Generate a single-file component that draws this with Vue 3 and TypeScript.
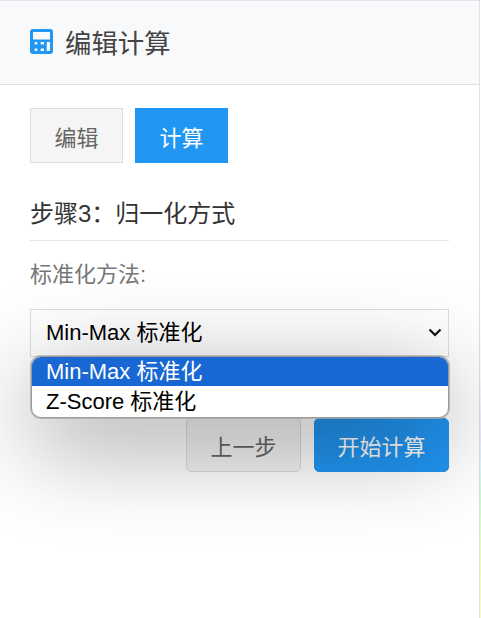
<script setup lang="ts">
const options: string[] = ['Min-Max 标准化', 'Z-Score 标准化']
</script>

<template>
  <div class="page">
    <div class="panel">
      <header class="head">
        <svg class="icon" viewBox="0 0 23 25" width="23" height="25" aria-hidden="true">
          <path fill="#2196f3" fill-rule="evenodd" d="M3 0h17a3 3 0 0 1 3 3v19a3 3 0 0 1-3 3H3a3 3 0 0 1-3-3V3a3 3 0 0 1 3-3zm0 3v7.5h17V3H3zm1.7 10v2.5h2.6V13H4.7zm6 0v2.5H14V13h-3.3zm6 0v9H20v-9h-3.3zM4.7 19.500v2.500h2.600v-2.500H4.700zm6 0v2.500H14v-2.500h-3.300z"/>
        </svg>
        <h1 class="title">编辑计算</h1>
      </header>
      <main class="body">
        <div class="tabs">
          <button class="tab">编辑</button>
          <button class="tab active">计算</button>
        </div>
        <h2 class="step">步骤3：归一化方式</h2>
        <label class="label">标准化方法:</label>
        <div class="field">
          <select class="select">
            <option v-for="o in options" :key="o">{{ o }}</option>
          </select>
          <svg class="chevron" viewBox="0 0 14 9" width="14" height="9" aria-hidden="true">
            <path d="M1.5 1.5 7 7l5.5-5.5" fill="none" stroke="#111" stroke-width="2.2" />
          </svg>
          <ul class="popup">
            <li v-for="(o, i) in options" :key="o" class="opt" :class="{ selected: i === 0 }">{{ o }}</li>
          </ul>
        </div>
        <div class="actions">
          <button class="btn prev">上一步</button>
          <button class="btn start">开始计算</button>
        </div>
      </main>
    </div>
    <div class="edge"></div>
  </div>
</template>

<style scoped>
.page {
  display: flex;
  width: 481px;
  height: 618px;
  overflow: hidden;
}
.panel {
  box-sizing: border-box;
  flex: none;
  width: 480px;
  height: 618px;
  background: #fff;
  border-top: 1px solid #e2e4e8;
  border-right: 1px solid #dfe0e2;
  font-family: "Liberation Sans", "Noto Sans CJK SC", sans-serif;
  color: #333;
}
.edge {
  flex: none;
  width: 1px;
  height: 618px;
  background: linear-gradient(to bottom, #fff 0, #fff 380px, #efeaff 433px, #d9f7fb 467px, #c8fbd0 500px, #f0fdb0 567px, #f8fcc8 618px);
}
.head {
  box-sizing: border-box;
  height: 84px;
  display: flex;
  align-items: center;
  gap: 12px;
  padding: 0 30px 2px;
  background: #f8f9fa;
  border-bottom: 1px solid #e0e0e0;
}
.icon { display: block; flex: none; }
.title {
  margin: 0;
  font-size: 26.4px;
  font-weight: 400;
  color: #444;
}
.body { padding: 23px 30px 0; }
.tabs { display: flex; gap: 12px; }
.tab {
  box-sizing: border-box;
  width: 93px;
  height: 55px;
  padding: 0;
  border: 1px solid #ddd;
  background: #f5f5f5;
  color: #666;
  font: inherit;
  font-size: 22px;
}
.tab.active {
  border-color: #2196f3;
  background: #2196f3;
  color: #fff;
}
.step {
  margin: 31px 0 0;
  padding-bottom: 6px;
  border-bottom: 1px solid #e5e5e5;
  font-size: 24px;
  line-height: 40px;
  font-weight: 400;
  color: #333;
}
.label {
  display: block;
  margin-top: 18px;
  font-size: 22px;
  line-height: 32px;
  color: #777;
}
.field { position: relative; margin-top: 18px; }
.select {
  box-sizing: border-box;
  display: block;
  width: 100%;
  height: 48px;
  padding: 0 15px 2px;
  border: 1px solid #ddd;
  background: #fff;
  color: #000;
  font: inherit;
  font-size: 22px;
  appearance: none;
  border-radius: 0;
}
.chevron {
  position: absolute;
  top: 19px;
  right: 7px;
  pointer-events: none;
}
.popup {
  position: absolute;
  top: 47px;
  left: 1px;
  right: 0;
  box-sizing: border-box;
  margin: 0;
  padding: 0;
  list-style: none;
  overflow: hidden;
  background: #fff;
  border: 1px solid #9c9c9c;
  border-radius: 10px;
  box-shadow: 0 0 0 1px rgba(170, 170, 170, 0.75), 0 24px 96px rgba(0, 0, 0, 0.42);
  z-index: 2;
}
.opt {
  height: 29px;
  padding: 0 14px;
  font-size: 22px;
  line-height: 29px;
  color: #000;
}
.opt + .opt { height: 31px; line-height: 31px; }
.opt.selected { background: #1967d2; color: #fff; }
.actions {
  display: flex;
  justify-content: flex-end;
  gap: 13px;
  margin-top: 61px;
}
.btn {
  box-sizing: border-box;
  height: 54px;
  padding: 0;
  border-radius: 5px;
  font: inherit;
  font-size: 22px;
}
.prev { width: 115px; border: 1px solid #ddd; background: #f5f5f5; color: #666; }
.start { width: 135px; border: 1px solid #2196f3; background: #2196f3; color: #fff; }
</style>
